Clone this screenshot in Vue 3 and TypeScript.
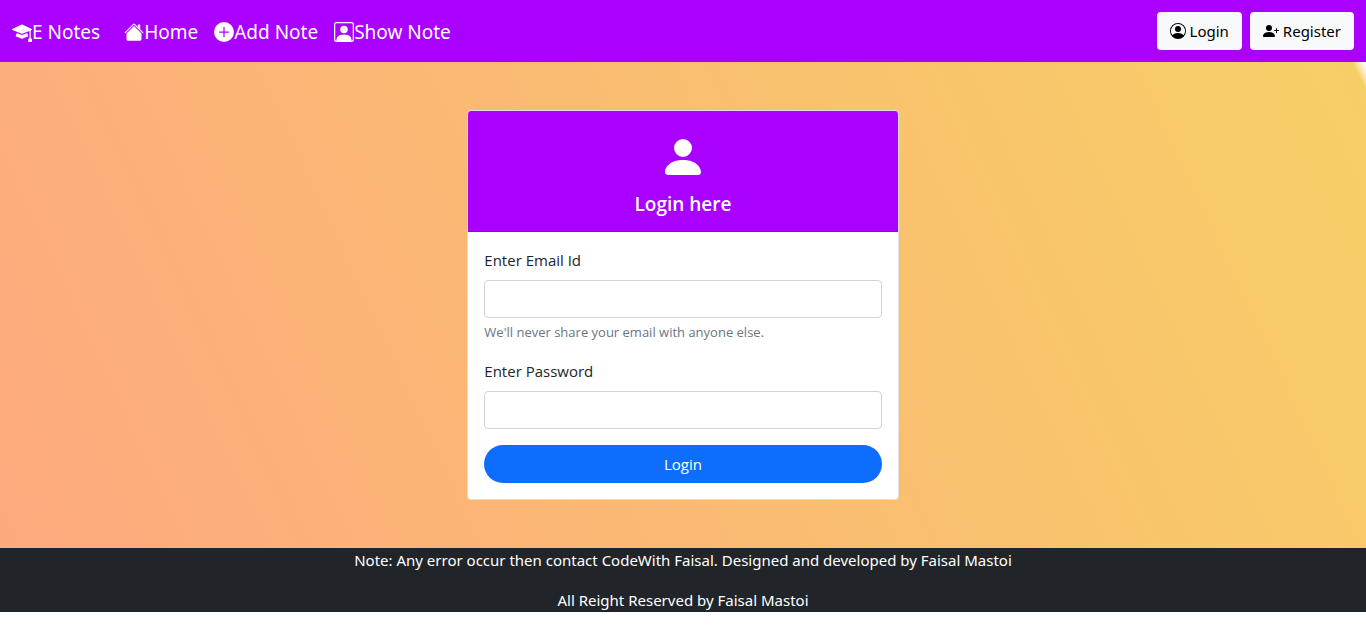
<script setup lang="ts">
import { ref } from 'vue'

interface NavLink {
  label: string
  paths: string[]
  brand?: boolean
}

const links: NavLink[] = [
  {
    label: 'E Notes',
    brand: true,
    paths: [
      'M8.211 2.047a.5.5 0 0 0-.422 0l-7.5 3.5a.5.5 0 0 0 .025.917l7.5 3a.5.5 0 0 0 .372 0L14 7.14V13a1 1 0 0 0-1 1v2h3v-2a1 1 0 0 0-1-1V6.739l.686-.275a.5.5 0 0 0 .025-.917l-7.5-3.5Z',
      'M4.176 9.032a.5.5 0 0 0-.656.327l-.5 1.7a.5.5 0 0 0 .294.605l4.5 1.8a.5.5 0 0 0 .372 0l4.5-1.8a.5.5 0 0 0 .294-.605l-.5-1.7a.5.5 0 0 0-.656-.327L8 10.466 4.176 9.032Z',
    ],
  },
  {
    label: 'Home',
    paths: [
      'm8 3.293 6 6V13.5a1.5 1.5 0 0 1-1.5 1.5h-9A1.5 1.5 0 0 1 2 13.5V9.293l6-6zm5-.793V6l-2-2V2.5a.5.5 0 0 1 .5-.5h1a.5.5 0 0 1 .5.5z',
      'M7.293 1.5a1 1 0 0 1 1.414 0l6.647 6.646a.5.5 0 0 1-.708.708L8 2.207 1.354 8.854a.5.5 0 1 1-.708-.708L7.293 1.5z',
    ],
  },
  {
    label: 'Add Note',
    paths: [
      'M16 8A8 8 0 1 1 0 8a8 8 0 0 1 16 0zM8.5 4.5a.5.5 0 0 0-1 0v3h-3a.5.5 0 0 0 0 1h3v3a.5.5 0 0 0 1 0v-3h3a.5.5 0 0 0 0-1h-3v-3z',
    ],
  },
  {
    label: 'Show Note',
    paths: [
      'M11 6a3 3 0 1 1-6 0 3 3 0 0 1 6 0z',
      'M2 0a2 2 0 0 0-2 2v12a2 2 0 0 0 2 2h12a2 2 0 0 0 2-2V2a2 2 0 0 0-2-2H2zm12 1a1 1 0 0 1 1 1v12a1 1 0 0 1-1 1v-1c0-1-1-4-6-4s-6 3-6 4v1a1 1 0 0 1-1-1V2a1 1 0 0 1 1-1h12z',
    ],
  },
]

const email = ref('')
const password = ref('')
</script>

<template>
  <div class="page">
    <nav class="navbar">
      <div class="links">
        <a v-for="link in links" :key="link.label" href="#" class="nav-link" :class="{ brand: link.brand }">
          <svg class="nav-icon" viewBox="0 0 16 16" aria-hidden="true">
            <path v-for="d in link.paths" :key="d" :d="d" />
          </svg>
          <span>{{ link.label }}</span>
        </a>
      </div>
      <div class="actions">
        <a href="#" class="action">
          <svg class="action-icon" viewBox="0 0 16 16" aria-hidden="true">
            <path d="M11 6a3 3 0 1 1-6 0 3 3 0 0 1 6 0z" />
            <path fill-rule="evenodd" d="M0 8a8 8 0 1 1 16 0A8 8 0 0 1 0 8zm8-7a7 7 0 0 0-5.468 11.37C3.242 11.226 4.805 10 8 10s4.757 1.225 5.468 2.37A7 7 0 0 0 8 1z" />
          </svg>
          <span>Login</span>
        </a>
        <a href="#" class="action">
          <svg class="action-icon" viewBox="0 0 16 16" aria-hidden="true">
            <path d="M1 14s-1 0-1-1 1-4 6-4 6 3 6 4-1 1-1 1H1zm5-6a3 3 0 1 0 0-6 3 3 0 0 0 0 6z" />
            <path fill-rule="evenodd" d="M13.5 5a.5.5 0 0 1 .5.5V7h1.5a.5.5 0 0 1 0 1H14v1.5a.5.5 0 0 1-1 0V8h-1.5a.5.5 0 0 1 0-1H13V5.5a.5.5 0 0 1 .5-.5z" />
          </svg>
          <span>Register</span>
        </a>
      </div>
    </nav>

    <main class="backdrop">
      <section class="card">
        <header class="card-header">
          <svg class="person" viewBox="0 0 16 16" aria-hidden="true">
            <path d="M3 14s-1 0-1-1 1-4 6-4 6 3 6 4-1 1-1 1H3zm5-6a3 3 0 1 0 0-6 3 3 0 0 0 0 6z" />
          </svg>
          <h1>Login here</h1>
        </header>
        <form class="card-body" @submit.prevent>
          <div class="field">
            <label for="email">Enter Email Id</label>
            <input id="email" v-model="email" type="email" aria-describedby="email-help" />
            <p id="email-help" class="help">We'll never share your email with anyone else.</p>
          </div>
          <div class="field">
            <label for="password">Enter Password</label>
            <input id="password" v-model="password" type="password" />
          </div>
          <button type="submit" class="submit">Login</button>
        </form>
      </section>
    </main>

    <footer class="footer">
      <p>Note: Any error occur then contact CodeWith Faisal. Designed and developed by Faisal Mastoi</p>
      <p>All Reight Reserved by Faisal Mastoi</p>
    </footer>
  </div>
</template>

<style>
body {
  margin: 0;
  background: #fff;
}
</style>

<style scoped>
.page,
.page * {
  box-sizing: border-box;
}

.page {
  font-family: "Segoe UI", "Open Sans", "Noto Sans", sans-serif;
  font-size: 15px;
  line-height: 24px;
  color: #212529;
}

svg {
  fill: currentColor;
  flex: none;
}

.navbar {
  display: flex;
  align-items: center;
  justify-content: space-between;
  padding: 12px;
  background: #aa00ff;
}

.links,
.actions {
  display: flex;
  align-items: center;
}

.links {
  gap: 16px;
}

.nav-link {
  display: flex;
  align-items: center;
  padding-top: 2px;
  color: #fff;
  font-family: "Segoe UI", "Noto Sans", sans-serif;
  font-size: 19px;
  line-height: 30px;
  text-decoration: none;
}

.brand {
  margin-right: 8px;
}

.nav-icon {
  width: 20px;
  height: 20px;
}

.actions {
  gap: 8px;
}

.action {
  display: flex;
  align-items: center;
  gap: 4px;
  padding: 7px 13px;
  border-radius: 4px;
  background: #f8f9fa;
  color: #000;
  font-family: "Segoe UI", "Noto Sans", sans-serif;
  text-decoration: none;
}

.action-icon {
  width: 16px;
  height: 16px;
}

.backdrop {
  display: flex;
  justify-content: center;
  padding: 48px 12px;
  background:
    linear-gradient(63deg, rgba(255, 255, 255, 0) 62%, #fff 95%) top right / 20px 36px no-repeat,
    linear-gradient(65deg, #fda97e 0%, #f7cf66 100%);
}

.card {
  width: calc(100% / 3 - 16px);
  min-width: 320px;
  overflow: hidden;
  border: 1px solid #dfdfdf;
  border-radius: 4px;
  background: #fff;
}

.card-header {
  display: flex;
  flex-direction: column;
  align-items: center;
  gap: 11px;
  padding: 22px 16px 15px;
  border-bottom: 1px solid #9500df;
  background: #aa00ff;
  color: #fff;
}

.person {
  width: 48px;
  height: 48px;
}

h1 {
  margin: 0;
  font-size: 19px;
  font-weight: 600;
  line-height: 24px;
}

.card-body {
  padding: 16px;
}

.field {
  margin-bottom: 16px;
}

.field label {
  display: block;
  margin-bottom: 8px;
}

.field input {
  display: block;
  width: 100%;
  height: 38px;
  padding: 6px 12px;
  border: 1px solid #ced4da;
  border-radius: 4px;
  background: #fff;
  color: #212529;
  font: inherit;
}

.help {
  margin: 4px 0 0;
  color: #6c757d;
  font-size: 13px;
  line-height: 21px;
}

.submit {
  display: block;
  width: 100%;
  height: 38px;
  padding: 6px 12px;
  border: 0;
  border-radius: 19px;
  background: #0d6efd;
  color: #fff;
  font: inherit;
}

.footer {
  display: flex;
  flex-direction: column;
  gap: 16px;
  background: #212529;
  color: #fff;
  font-family: "Segoe UI", "Noto Sans", sans-serif;
  text-align: center;
}

.footer p {
  margin: 0;
}
</style>
